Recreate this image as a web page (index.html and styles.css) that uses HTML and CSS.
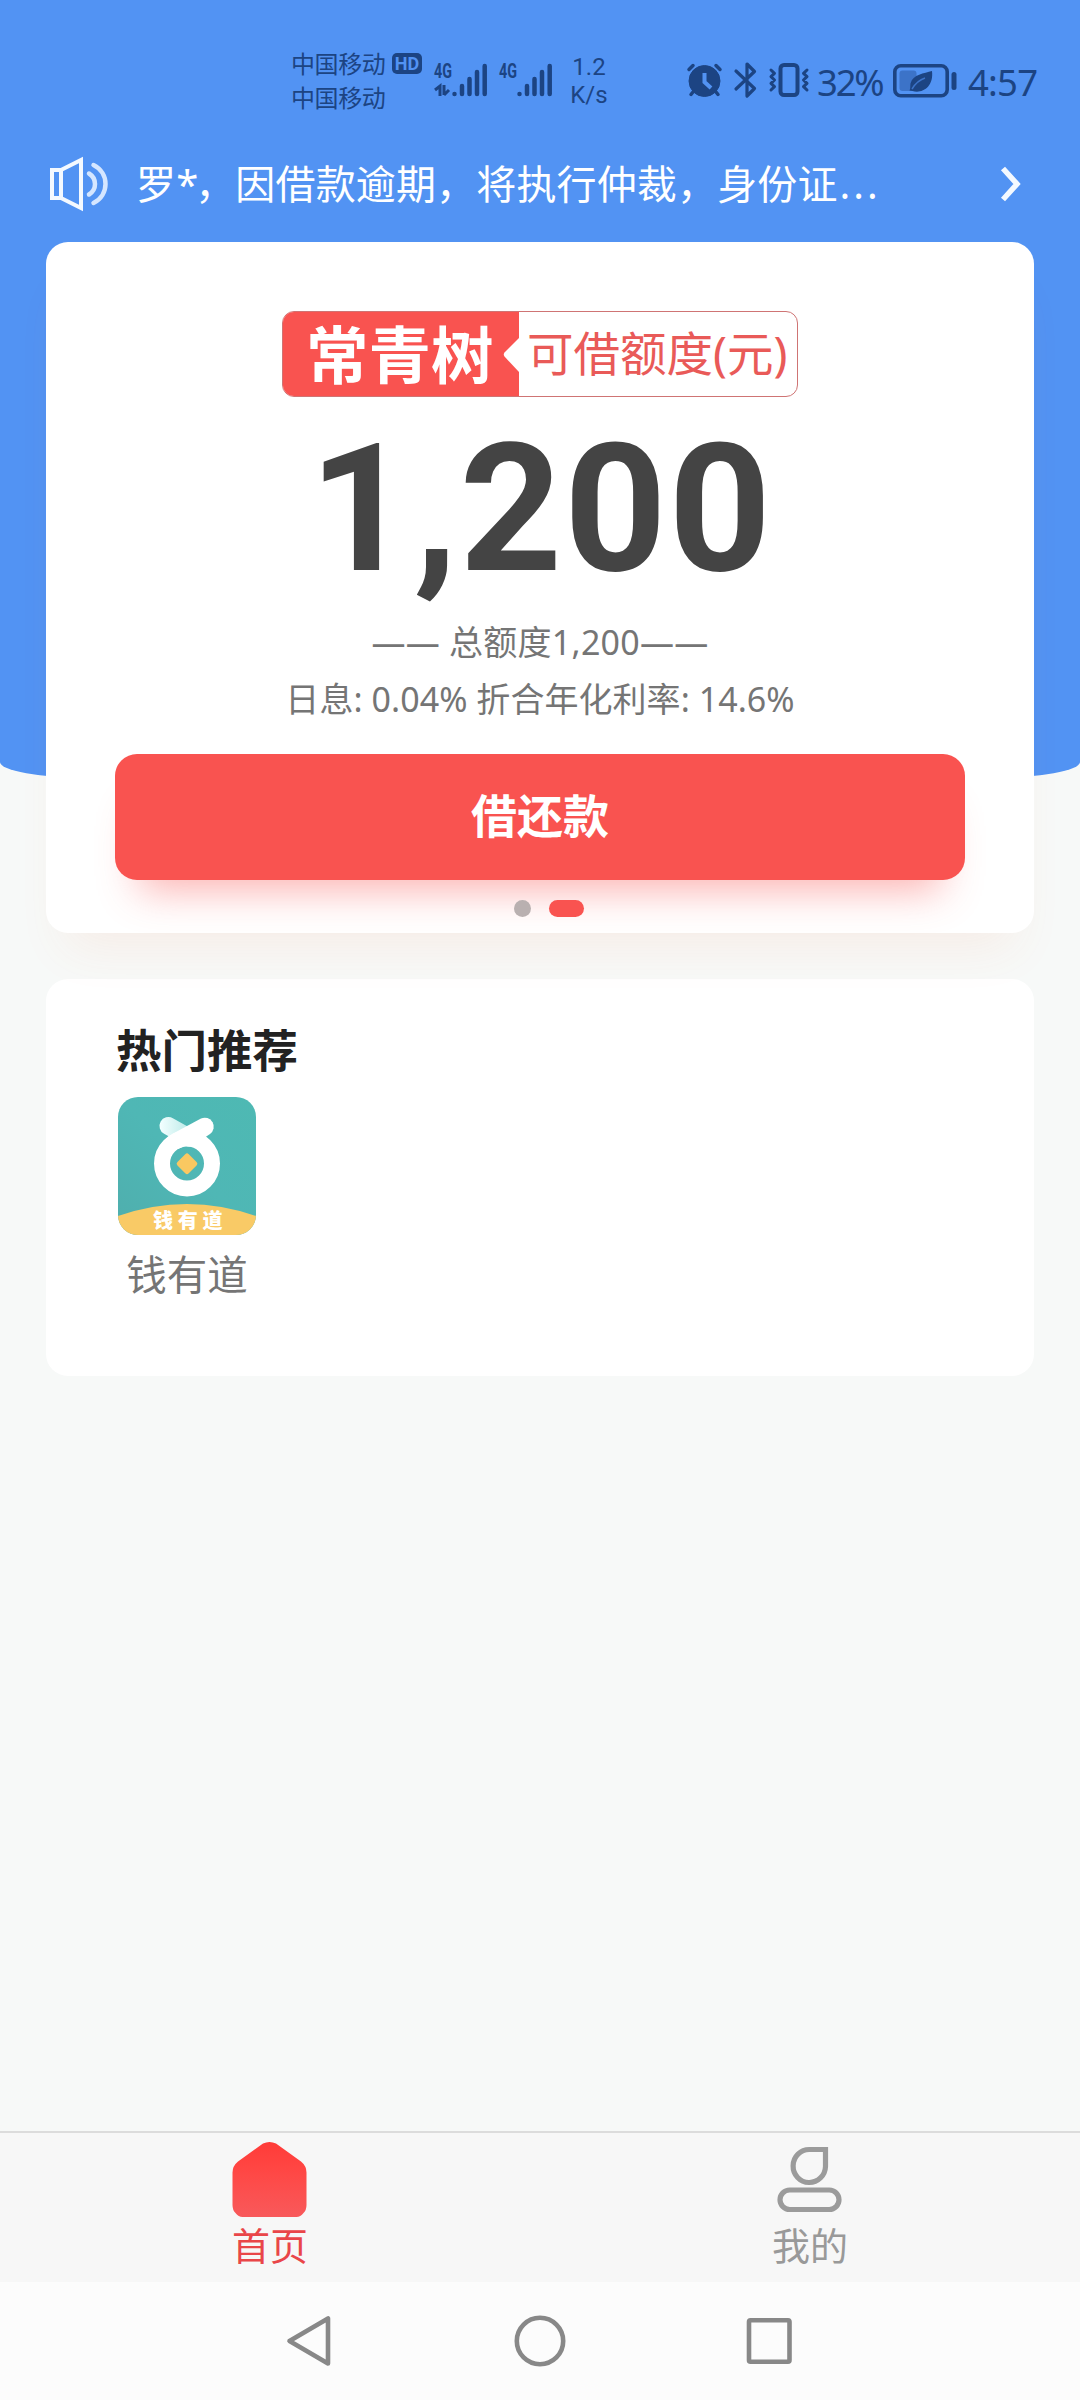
FILE: index.html
```html
<!DOCTYPE html>
<html lang="zh-CN">
<head>
<meta charset="utf-8">
<title>常青树</title>
<link rel="stylesheet" href="styles.css">
</head>
<body>
<div class="screen">
  <div class="status">
    <div class="carriers"><span>中国移动</span><span>中国移动</span></div>
    <div class="hd">HD</div>
    <svg class="signal" width="54" height="35" viewBox="0 0 54 35">
      <text class="net" x="0" y="15" textLength="18" lengthAdjust="spacingAndGlyphs">4G</text>
      <path d="M1 27l5-4v10M10 22v10M10 32l5-5" stroke-width="3"/>
      <path d="M20.500 31v.1M28 23v8M35.500 16v15M43 9v22M50.700 3v28" stroke-width="4.500" stroke-linecap="round"/>
    </svg>
    <svg class="signal signal-2" width="54" height="35" viewBox="0 0 54 35">
      <text class="net" x="0" y="15" textLength="18" lengthAdjust="spacingAndGlyphs">4G</text>
      <path d="M20.500 31v.1M28 23v8M35.500 16v15M43 9v22M50.700 3v28" stroke-width="4.500" stroke-linecap="round"/>
    </svg>
    <div class="speed"><span>1.2</span><span>K/s</span></div>
    <svg class="alarm" width="36" height="34" viewBox="0 0 36 34">
      <circle cx="17.500" cy="18" r="15.500" fill="#1c4483"/>
      <path d="M2 6.500L6 2.500M33 6.500L29 2.500M6 29l-2 2.500M29 29l2 2.500" stroke-width="3.500" stroke-linecap="round"/>
      <path d="M17.500 10v9l6.500 6" class="hand"/>
    </svg>
    <svg class="bt" width="24" height="36" viewBox="0 0 24 36">
      <path d="M2 9l18.500 17.500L13 34V2l7.500 7.500L2 27" stroke-width="3.200" stroke-linecap="round" stroke-linejoin="round"/>
    </svg>
    <svg class="vib" width="40" height="34" viewBox="0 0 40 34">
      <rect x="11.500" y="2" width="17" height="30" rx="3.500" stroke-width="4"/>
      <path d="M2 7l3.500 3.300L2 13.600 5.500 17 2 20.400l3.500 3.300L2 27M38 7l-3.500 3.300L38 13.600 34.500 17l3.500 3.400-3.500 3.300L38 27" stroke-width="3" stroke-linejoin="round" stroke-linecap="round"/>
    </svg>
    <span class="pct">32%</span>
    <svg class="battery" width="64" height="34" viewBox="0 0 64 34">
      <rect x="1.800" y="1.800" width="52.400" height="30" rx="6" stroke-width="3.600"/>
      <rect x="6.500" y="6.500" width="17" height="20.500" rx="3" fill="#3c73c8" stroke="none"/>
      <path d="M39 7c-8 2.500-19 3-21.500 12.500-.5 3 .3 4.500-1 7l3 .5C29 30 41 23 39 7z" fill="#1c4483" stroke="none"/>
      <path d="M19 25c3-5 7-9 13-11" stroke="#3c73c8" stroke-width="1.500"/>
      <path d="M61 10.500v13" stroke-width="5" stroke-linecap="round"/>
    </svg>
    <span class="clock">4:57</span>
  </div>

  <div class="notice">
    <svg width="60" height="54" viewBox="0 0 60 54">
      <path d="M3 13h9v28H3zM12 13L32 3v48L12 41" class="spk"/>
      <path d="M40 16.500c8 5 8 16 0 21M44.500 8c16 8 16 30 0 38" class="wave"/>
    </svg>
    <p>罗<span class="star">*</span>，因借款逾期，将执行仲裁，身份证<span class="dots3">...</span></p>
    <svg width="20" height="38" viewBox="0 0 20 38"><path d="M3 3.500L17 19 3 34.500" class="chev"/></svg>
  </div>

  <section class="card loan">
    <div class="badge">
      <div class="brand">常青树<svg class="notch" width="16" height="34" viewBox="0 0 16 34"><path d="M16 0L1.500 14.500q-1.500 2 0 4L16 34z"/></svg></div>
      <div class="quota">可借额度(元)</div>
    </div>
    <div class="amount">1,200</div>
    <p class="line total">—— 总额度1,200——</p>
    <p class="line rate">日息: 0.04% 折合年化利率: 14.6%</p>
    <div class="button">借还款</div>
    <div class="pager"><i></i><i class="on"></i></div>
  </section>

  <section class="card hot">
    <h2>热门推荐</h2>
    <div class="app">
      <svg width="138" height="138" viewBox="0 0 138 138">
        <defs>
          <clipPath id="round"><rect width="138" height="138" rx="20"/></clipPath>
          <linearGradient id="teal" x1="1" y1="0" x2="0" y2="1"><stop offset="0" stop-color="#4eb9b3"/><stop offset=".5" stop-color="#4fb7b5"/><stop offset="1" stop-color="#4faead"/></linearGradient>
          <linearGradient id="ear" gradientUnits="userSpaceOnUse" x1="42" y1="0" x2="70" y2="0"><stop offset="0" stop-color="#f2ffff"/><stop offset="1" stop-color="#bfebe9"/></linearGradient>
        </defs>
        <g clip-path="url(#round)">
          <rect width="138" height="138" fill="url(#teal)"/>
          <path d="M50.500 29L72 41" stroke="url(#ear)" stroke-width="18" stroke-linecap="round"/>
          <path d="M55 36.500L83 21.500A9 9 0 0 1 92 37L86 41 60 52 48 42z" fill="#fff"/>
          <circle cx="69" cy="66.500" r="25" fill="none" stroke="#fff" stroke-width="16"/>
          <rect x="61" y="58.700" width="16" height="16" rx="2.500" fill="#f9c861" transform="rotate(45 69 66.700)"/>
          <path d="M0 119Q69 95 138 119V138H0z" fill="#f9ca66"/>
          <text x="35" y="131" class="tag">钱有道</text>
        </g>
      </svg>
      <span>钱有道</span>
    </div>
  </section>

  <div class="tabs">
    <div class="tab active">
      <svg width="76" height="76" viewBox="0 0 76 76">
        <defs><linearGradient id="red" x1="0" y1="0" x2="0" y2="1"><stop offset="0" stop-color="#ff3b38"/><stop offset=".35" stop-color="#ff4643"/><stop offset="1" stop-color="#f8595b"/></linearGradient></defs>
        <path d="M31 1.500Q37.500-1.500 44 1.500L69 19.500q5.500 4.500 5.500 11V63q0 5-3 8-3 4-7 4H10.500q-4 0-7-4-3-3-3-8V30.500q0-6.500 5.500-11z" fill="url(#red)"/>
      </svg>
      <span>首页</span>
    </div>
    <div class="tab">
      <svg width="76" height="76" viewBox="0 0 76 76">
        <path d="M37.500 7.500H53.500V24.500A16.200 16.500 0 1 1 37.500 7.500z" class="me"/>
        <rect x="8" y="48" width="59" height="19.500" rx="9.700" class="me"/>
      </svg>
      <span>我的</span>
    </div>
  </div>

  <div class="nav">
    <svg width="52" height="52" viewBox="0 0 52 52"><path d="M45 3.500v45L6.500 26z"/></svg>
    <svg width="52" height="52" viewBox="0 0 52 52"><circle cx="26" cy="26" r="23.200"/></svg>
    <svg width="52" height="52" viewBox="0 0 52 52"><rect x="4" y="5.200" width="40.500" height="41.500" rx="1.500"/></svg>
  </div>
</div>
</body>
</html>
```
FILE: styles.css
```css
* { box-sizing: border-box; margin: 0; padding: 0; }
body {
  width: 1080px;
  background: #f7f9f8;
  font-family: "Noto Sans", "Noto Sans CJK SC", sans-serif;
}
svg { display: block; flex: none; overflow: visible; }
.screen {
  width: 1080px;
  height: 2400px;
  display: flex;
  flex-direction: column;
  overflow: hidden;
  position: relative;
}
.screen::before {
  content: "";
  position: absolute;
  inset: 0 0 auto;
  height: 778px;
  background: #5293f3;
  border-radius: 0 0 90px 90px / 0 0 16px 16px;
  z-index: -1;
}

.status {
  height: 150px;
  display: flex;
  align-items: flex-start;
  padding-left: 291px;
  color: #1c4483;
}
.status svg { fill: none; stroke: #1c4483; }
.carriers {
  display: flex;
  flex-direction: column;
  padding-top: 47px;
  width: 96px;
  font-size: 24px;
  line-height: 33.5px;
  letter-spacing: -.4px;
}
.hd {
  width: 30px;
  height: 21px;
  margin: 53px 0 0 5px;
  border-radius: 5px;
  background: #1c4483;
  color: #5293f3;
  font: 700 18px/21px Roboto, sans-serif;
  text-align: center;
}
.signal { margin: 63px 0 0 12px; }
.signal-2 { margin-left: 11px; }
.net { font: 700 20px Roboto, sans-serif; fill: #1c4483; stroke: none; }
.speed {
  display: flex;
  flex-direction: column;
  align-items: center;
  width: 44px;
  margin: 53px 0 0 14px;
  font: 400 24px/28px Roboto, sans-serif;
}
.alarm { margin: 63px 0 0 76px; }
.alarm .hand { stroke: #5293f3; stroke-width: 4; }
.bt { margin: 62px 0 0 11px; }
.vib { margin: 63px 0 0 11px; }
.pct, .clock { font-size: 36.500px; line-height: 50px; font-weight: 400; white-space: nowrap; }
.pct { margin: 57px 0 0 8px; width: 68px; letter-spacing: -2.2px; }
.battery { margin: 64px 0 0 8px; }
.clock { margin: 57px 0 0 11px; letter-spacing: -.8px; }

.notice {
  height: 92px;
  display: flex;
  align-items: flex-start;
  padding: 7px 60px 0 49px;
  color: #fff;
}
.notice p {
  flex: 1;
  margin: -3px 0 0 27px;
  font-size: 40px;
  line-height: 60px;
  letter-spacing: .15px;
  white-space: nowrap;
}
.notice svg:last-child { margin-top: 8px; }
.star { letter-spacing: -3px; }
.dots3 { letter-spacing: 3px; padding-left: 2px; }
.spk, .wave, .chev { fill: none; stroke: #f4f9ff; }
.spk { stroke-width: 4; }
.wave { stroke: #d5e6ff; stroke-width: 4.500; stroke-linecap: round; }
.chev { stroke-width: 5.500; }

.card {
  width: 988px;
  margin: 0 46px;
  background: #fff;
  border-radius: 22px;
  flex: none;
}
.loan {
  height: 691px;
  display: flex;
  flex-direction: column;
  align-items: center;
  padding-top: 69px;
  position: relative;
  box-shadow: 0 34px 50px -20px rgba(245, 110, 50, .09);
}
.badge {
  display: flex;
  width: 516px;
  height: 86px;
  border: 1px solid #cf7474;
  border-radius: 12px;
  overflow: hidden;
}
.brand {
  position: relative;
  width: 236px;
  background: #f95350;
  color: #fff;
  font-size: 62.500px;
  font-weight: 700;
  line-height: 86px;
  padding-left: 23px;
}
.notch { position: absolute; right: 0; top: 26px; fill: #fff; }
.quota {
  flex: 1;
  color: #e95a58;
  font-size: 46.500px;
  line-height: 83px;
  padding-left: 8px;
  white-space: nowrap;
}
.amount {
  height: 210px;
  line-height: 224px;
  font-family: Roboto, sans-serif;
  font-size: 179px;
  font-weight: 700;
  letter-spacing: 1.8px;
  padding-left: 2px;
  color: #444;
}
.line { color: #757575; font-size: 34px; line-height: 56px; white-space: nowrap; }
.total { margin-top: 7px; letter-spacing: .25px; }
.rate { margin-top: 1px; letter-spacing: .05px; }
.button {
  width: 850px;
  height: 126px;
  margin-top: 27px;
  border-radius: 22px;
  background: #f95350;
  color: #fff;
  font-size: 46px;
  font-weight: 700;
  line-height: 123px;
  text-align: center;
  box-shadow: 0 34px 40px -24px rgba(249, 83, 80, .45);
}
.pager { display: flex; gap: 18px; margin: 20px 0 0 18px; }
.pager i { width: 17px; height: 17px; border-radius: 9px; background: #b9b0b0; }
.pager .on { width: 35px; background: #f95350; }

.hot { height: 397px; margin-top: 46px; padding: 37px 70px 0; }
.hot h2 { font-size: 45.500px; line-height: 68px; color: #222; }
.app { width: 138px; margin: 13px 0 0 2px; text-align: center; font-size: 40.500px; line-height: 60px; color: #757575; }
.app span { display: block; margin-top: 10px; }
.tag { font: 900 20px "Noto Sans CJK SC", sans-serif; letter-spacing: 4.800px; fill: #fff; }

.tabs {
  height: 151px;
  margin-top: auto;
  display: flex;
  flex: none;
  border-top: 2px solid #dcdcdc;
  background: #f7f7f7;
}
.tab {
  flex: 1;
  display: flex;
  flex-direction: column;
  align-items: center;
  padding-top: 9px;
  color: #999;
  font-size: 38px;
  line-height: 54px;
}
.active { color: #e94649; }
.me { fill: none; stroke: #9b9b9b; stroke-width: 5.200; }
.nav {
  height: 118px;
  flex: none;
  display: flex;
  justify-content: center;
  gap: 179px;
  padding-top: 33px;
  background: #fcfcfc;
}
.nav svg { fill: none; stroke: #888; stroke-width: 4.600; stroke-linejoin: round; }
```
